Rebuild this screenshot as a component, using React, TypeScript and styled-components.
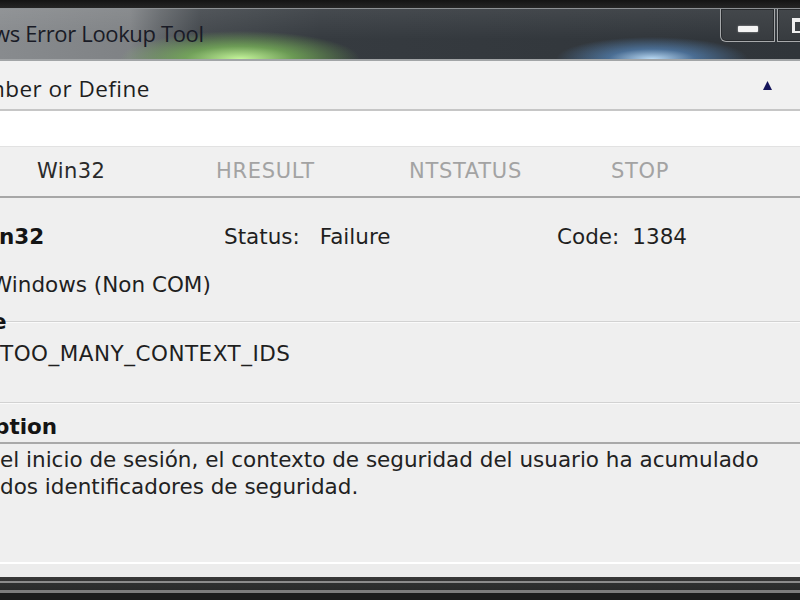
import React from "react";
import styled, { createGlobalStyle } from "styled-components";

const Global = createGlobalStyle`
  html, body { margin: 0; padding: 0; background: #1b1b1b; overflow: hidden; }
  body { width: 800px; height: 600px; }
  #root { width: 800px; height: 600px; }
`;

const Window = styled.div`
  width: 800px;
  height: 600px;
  display: flex;
  flex-direction: column;
  overflow: hidden;
  background: #efefef;
  color: #1f1f1f;
  font-family: "DejaVu Sans", Verdana, sans-serif;
  font-size: 21.5px;
`;

const TopStrip = styled.div`
  flex: none;
  height: 8px;
  background: linear-gradient(#141414, #252525);
  border-bottom: 1px solid #8d9194;
`;

const TitleBar = styled.div`
  flex: none;
  height: 50px;
  display: flex;
  align-items: flex-start;
  overflow: hidden;
  border-bottom: 2px solid #a2a5a7;
  background:
    radial-gradient(ellipse 120px 28px at 240px 100%, rgba(205, 255, 160, 0.95) 0%, rgba(140, 215, 95, 0.6) 45%, rgba(80, 140, 60, 0) 100%),
    radial-gradient(ellipse 96px 22px at 652px 100%, rgba(195, 228, 255, 0.95) 0%, rgba(95, 155, 220, 0.55) 45%, rgba(60, 100, 150, 0) 100%),
    linear-gradient(to bottom, rgba(255, 255, 255, 0.08), rgba(255, 255, 255, 0) 60%),
    linear-gradient(to right, #888b8e 0px, #7f8285 130px, #62666a 160px, #43484d 200px, #363b40 320px, #30353a 800px);
`;

const Title = styled.div`
  flex: 1;
  margin-left: -7px;
  font-family: "Open Sans", "Noto Sans", sans-serif;
  font-size: 22px;
  letter-spacing: -0.35px;
  line-height: 48px;
  color: #191b26;
  white-space: nowrap;
`;

const CaptionButtons = styled.div`
  flex: none;
  display: flex;
  gap: 2px;
  margin-right: -17px;
`;

const CaptionButton = styled.div<{ $w: number; $first?: boolean }>`
  box-sizing: border-box;
  width: ${(p) => p.$w}px;
  height: 33px;
  display: flex;
  align-items: flex-end;
  justify-content: ${(p) => (p.$first ? "center" : "flex-start")};
  padding: ${(p) => (p.$first ? "0 0 9px 0" : "0 0 8px 14px")};
  border: 1px solid #a7a9ab;
  border-top: none;
  border-radius: ${(p) => (p.$first ? "0 0 0 6px" : "0")};
  background: linear-gradient(#43474b, #373b3f);
  box-shadow: inset 0 0 0 1px #282b2e;
`;

const MinGlyph = styled.div`
  width: 20px;
  height: 6px;
  background: #f4f4f4;
  border-radius: 1px;
  box-shadow: 0 0 2px rgba(255, 255, 255, 0.6);
`;

const MaxGlyph = styled.div`
  box-sizing: border-box;
  width: 16px;
  height: 15px;
  border: 2px solid #f0f0f0;
  border-top-width: 4px;
  border-left-width: 3px;
`;

const LookupBar = styled.div`
  flex: none;
  height: 48px;
  display: flex;
  align-items: center;
  justify-content: space-between;
  padding-right: 28px;
  background: #f1f1f1;
  border-bottom: 2px solid #c6c6c6;
`;

const LookupLabel = styled.div`
  margin-left: -16px;
  padding-top: 8px;
  font-family: "Open Sans", "Noto Sans", sans-serif;
  font-size: 22.5px;
  letter-spacing: 0.45px;
  line-height: 40px;
  color: #1e1e1e;
  white-space: nowrap;
`;

const InputField = styled.div`
  flex: none;
  height: 35px;
  background: #ffffff;
  border-bottom: 1px solid #e2e2e2;
`;

const TabBar = styled.div`
  flex: none;
  height: 49px;
  display: flex;
  padding-left: 37px;
  background: #f0f0f0;
  border-bottom: 2px solid #a7a7a7;
`;

const Tab = styled.div<{ $w?: number; $active?: boolean }>`
  flex: none;
  width: ${(p) => (p.$w ? `${p.$w}px` : "auto")};
  font-size: 21px;
  letter-spacing: ${(p) => (p.$active ? "0.4px" : "0.7px")};
  line-height: 49px;
  color: ${(p) => (p.$active ? "#2a2a2a" : "#a3a3a3")};
  white-space: nowrap;
`;

const InfoBlock = styled.div`
  flex: none;
  padding: 15px 0 12px;
`;

const InfoRow = styled.div`
  display: grid;
  grid-template-columns: 224px 333px 1fr;
  line-height: 48px;
  white-space: nowrap;
`;

const Pair = styled.div<{ $gap: number }>`
  display: flex;
  gap: ${(p) => p.$gap}px;
`;

const Bold = styled.span<{ $shift?: number }>`
  font-weight: bold;
  color: #141414;
  margin-left: ${(p) => p.$shift ?? 0}px;
`;

const PlainLine = styled.div<{ $shift?: number; $lh: number; $ls?: number }>`
  margin-left: ${(p) => p.$shift ?? 0}px;
  line-height: ${(p) => p.$lh}px;
  letter-spacing: ${(p) => p.$ls ?? 0}px;
  white-space: nowrap;
`;

const Section = styled.div<{ $pb: number }>`
  flex: none;
  border-top: 1px solid #d2d2d2;
  box-shadow: inset 0 1px 0 #fafafa;
  padding-bottom: ${(p) => p.$pb}px;
`;

const SectionLabel = styled.div<{ $shift: number; $lh: number; $mt?: number; $pt?: number }>`
  font-weight: bold;
  color: #141414;
  margin-left: ${(p) => p.$shift}px;
  margin-top: ${(p) => p.$mt ?? 0}px;
  padding-top: ${(p) => p.$pt ?? 0}px;
  line-height: ${(p) => p.$lh}px;
  white-space: nowrap;
`;

const Description = styled.div`
  flex: none;
  height: 115px;
  padding-top: 3px;
  border-top: 2px solid #a9a9a9;
  border-bottom: 2px solid #ffffff;
  line-height: 26.5px;
  color: #222222;
  white-space: nowrap;
`;

const Footer = styled.div`
  flex: none;
  height: 13px;
  background: #ececec;
`;

const Frame = styled.div`
  flex: none;
  height: 23px;
  background: linear-gradient(
    to bottom,
    #383838 0px,
    #333333 4px,
    #8b8b8b 4px,
    #8b8b8b 6px,
    #2e3030 6px,
    #2a2b2b 13px,
    #7c7c7c 13px,
    #7c7c7c 16px,
    #1b1c1c 16px
  );
`;

const Arrow = () => (
  <svg width="9" height="9" viewBox="0 0 9 9">
    <polygon points="4.5,0 9,9 0,9" fill="#14145a" />
  </svg>
);

export default function App() {
  return (
    <>
      <Global />
      <Window>
        <TopStrip />
        <TitleBar>
          <Title>ws Error Lookup Tool</Title>
          <CaptionButtons>
            <CaptionButton $w={55} $first>
              <MinGlyph />
            </CaptionButton>
            <CaptionButton $w={40}>
              <MaxGlyph />
            </CaptionButton>
          </CaptionButtons>
        </TitleBar>
        <LookupBar>
          <LookupLabel>mber or Define</LookupLabel>
          <Arrow />
        </LookupBar>
        <InputField />
        <TabBar>
          <Tab $w={179} $active>Win32</Tab>
          <Tab $w={193}>HRESULT</Tab>
          <Tab $w={202}>NTSTATUS</Tab>
          <Tab>STOP</Tab>
        </TabBar>
        <InfoBlock>
          <InfoRow>
            <div>
              <Bold $shift={-1}>n32</Bold>
            </div>
            <Pair $gap={20}>
              <span>Status:</span>
              <span>Failure</span>
            </Pair>
            <Pair $gap={13}>
              <span>Code:</span>
              <span>1384</span>
            </Pair>
          </InfoRow>
          <PlainLine $shift={-9} $lh={48}>Windows (Non COM)</PlainLine>
        </InfoBlock>
        <Section $pb={25}>
          <SectionLabel $shift={-8} $lh={16} $mt={-8}>e</SectionLabel>
          <PlainLine $lh={47} $ls={0.5}>TOO_MANY_CONTEXT_IDS</PlainLine>
        </Section>
        <Section $pb={0}>
          <SectionLabel $shift={-6} $lh={30} $pt={9}>ption</SectionLabel>
        </Section>
        <Description>
          <div>el inicio de sesión, el contexto de seguridad del usuario ha acumulado</div>
          <div>dos identificadores de seguridad.</div>
        </Description>
        <Footer />
        <Frame />
      </Window>
    </>
  );
}
